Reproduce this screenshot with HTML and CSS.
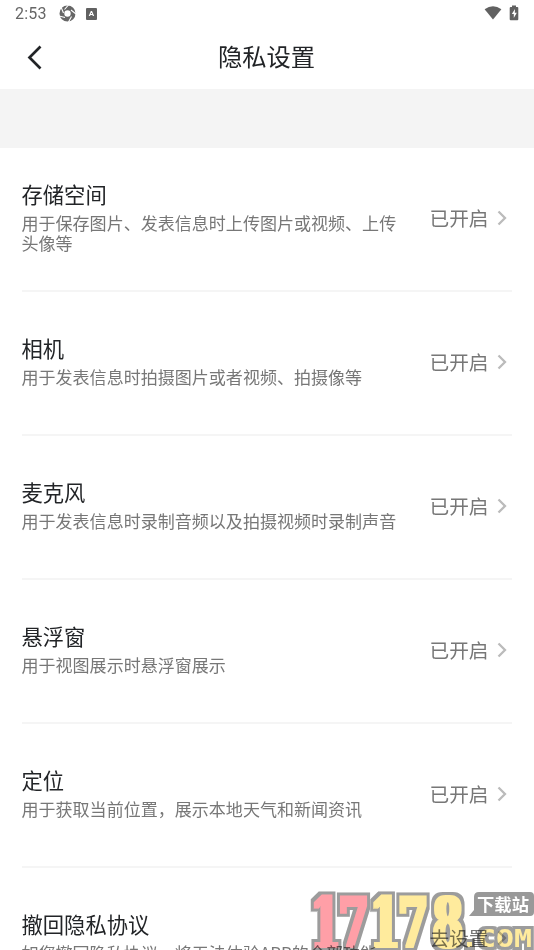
FILE: index.html
```html
<!DOCTYPE html>
<html lang="zh-CN">
<head>
<meta charset="utf-8">
<title>隐私设置</title>
<link rel="stylesheet" href="styles.css">
</head>
<body>
<div class="screen">
  <div class="status">
    <span class="time">2:53</span>
    <svg class="aperture" width="17" height="17" viewBox="0 0 17 17"><circle cx="8.500" cy="8.500" r="5.600" fill="none" stroke="#666" stroke-width="4.800"/><path d="M9.500 0L5.500 4.500M17 9L12 5M9.500 17l3-5.500M0 11l6 1.500M2 2l2.500 6" stroke="#fff" stroke-width="1.100"/></svg>
    <span class="abadge">A</span>
    <svg class="wifi" width="18" height="14" viewBox="0 0 18 14"><path d="M.6 3.200Q9-2.800 17.400 3.200L9 13.600z" fill="#616161"/></svg>
    <svg class="battery" width="10" height="16" viewBox="0 0 10 16"><path d="M3 .5h4V2h1.300q1 0 1 1v11.300q0 1-1 1H1.700q-1 0-1-1V3q0-1 1-1H3z" fill="#616161"/><path d="M6 4L2.800 9h2v4l3-5.300h-2z" fill="#fff"/></svg>
  </div>
  <header class="bar">
    <svg class="back" width="16" height="26" viewBox="0 0 16 26"><path d="M13.500 2.500L2.500 13.500l11 11" fill="none" stroke="#222427" stroke-width="2.700"/></svg>
    <h1>隐私设置</h1>
  </header>
  <div class="band"></div>
  <main class="list">
    <section class="row"><div class="info"><h2>存储空间</h2><p>用于保存图片、发表信息时上传图片或视频、上传<br>头像等</p></div><span class="state">已开启</span><svg class="chev" width="10" height="16" viewBox="0 0 10 16"><path d="M1.500 1.500L8 8l-6.500 6.500"/></svg></section>
    <section class="row"><div class="info"><h2>相机</h2><p>用于发表信息时拍摄图片或者视频、拍摄像等</p></div><span class="state">已开启</span><svg class="chev" width="10" height="16" viewBox="0 0 10 16"><path d="M1.500 1.500L8 8l-6.500 6.500"/></svg></section>
    <section class="row"><div class="info"><h2>麦克风</h2><p>用于发表信息时录制音频以及拍摄视频时录制声音</p></div><span class="state">已开启</span><svg class="chev" width="10" height="16" viewBox="0 0 10 16"><path d="M1.500 1.500L8 8l-6.500 6.500"/></svg></section>
    <section class="row"><div class="info"><h2>悬浮窗</h2><p>用于视图展示时悬浮窗展示</p></div><span class="state">已开启</span><svg class="chev" width="10" height="16" viewBox="0 0 10 16"><path d="M1.500 1.500L8 8l-6.500 6.500"/></svg></section>
    <section class="row"><div class="info"><h2>定位</h2><p>用于获取当前位置，展示本地天气和新闻资讯</p></div><span class="state">已开启</span><svg class="chev" width="10" height="16" viewBox="0 0 10 16"><path d="M1.500 1.500L8 8l-6.500 6.500"/></svg></section>
    <section class="row"><div class="info"><h2>撤回隐私协议</h2><p>如您撤回隐私协议，将无法体验APP的全部功能</p></div><span class="state">去设置</span><svg class="chev" width="10" height="16" viewBox="0 0 10 16"><path d="M1.500 1.500L8 8l-6.500 6.500"/></svg></section>
  </main>
  <svg class="mark" width="234" height="70" viewBox="0 0 234 70">
    <defs>
      <filter id="block" x="0" y="0" width="234" height="80" filterUnits="userSpaceOnUse" color-interpolation-filters="sRGB">
        <feMorphology in="SourceGraphic" operator="dilate" radius="2 1" result="face"/>
        <feMorphology in="face" operator="dilate" radius="3" result="edge"/>
        <feFlood flood-color="#9c9c9c"/>
        <feComposite in2="edge" operator="in" result="rim"/>
        <feMerge><feMergeNode in="rim"/><feMergeNode in="face"/></feMerge>
      </filter>
      <filter id="small" x="0" y="0" width="234" height="80" filterUnits="userSpaceOnUse" color-interpolation-filters="sRGB">
        <feMorphology in="SourceGraphic" operator="dilate" radius="3" result="edge"/>
        <feFlood flood-color="#9c9c9c"/>
        <feComposite in2="edge" operator="in" result="rim"/>
        <feMerge><feMergeNode in="rim"/><feMergeNode in="SourceGraphic"/></feMerge>
      </filter>
    </defs>
    <g filter="url(#block)">
      <g class="digits" transform="scale(.62 1)">
        <text x="17 62" y="67" class="pink">17</text>
        <text x="113 158 214" y="67" class="gold">178</text>
      </g>
    </g>
    <g filter="url(#small)">
      <text x="178" y="67" textLength="54" lengthAdjust="spacingAndGlyphs" class="com">COM</text>
      <rect x="167" y="62" width="5" height="5" class="gold"/>
    </g>
    <path d="M179 12h51q4 0 4 4v16q0 4-4 4H169l5-6V17q0-5 5-5z" fill="#999"/>
    <text x="177" y="31" textLength="52" class="tag">下载站</text>
  </svg>
</div>
</body>
</html>
```
FILE: styles.css
```css
* { box-sizing: border-box; }
body { margin: 0; background: #fff; font-family: "Noto Sans CJK SC", sans-serif; overflow: hidden; }
.screen { position: relative; width: 534px; height: 950px; overflow: hidden; background: #fff; }
.status { height: 28px; display: flex; align-items: center; padding: 0 15px 2px; }
.time { font: 16px/20px Roboto, sans-serif; color: #666; width: 44px; letter-spacing: .2px; padding-top: 2px; }
.abadge { width: 11px; height: 12px; margin-left: 10px; margin-top: 1px; border-radius: 1px; background: #616161; color: #fff; font: bold 8px/12px Roboto, sans-serif; text-align: center; }
.wifi { margin-left: auto; }
.battery { margin: 0 0 0 7px; }
.bar { height: 61px; display: grid; grid-template-columns: 54px 1fr 54px; align-items: center; padding-bottom: 3px; }
.back { margin-left: 27px; }
h1 { margin: 0 1px 3px 0; font-size: 24.300px; font-weight: 400; line-height: 32px; text-align: center; color: #222427; }
.band { height: 59px; background: #f4f4f4; }
.list { padding: 0 22px 0 21.500px; }
.row { height: 144px; display: flex; align-items: center; padding-bottom: 2px; border-bottom: 2px solid #f5f5f5; }
.info { width: 408px; flex: none; white-space: nowrap; }
h2 { margin: 0 0 8px; font-size: 21.300px; font-weight: 400; line-height: 22px; color: #222427; }
p { margin: 0; font-size: 17.050px; line-height: 20px; color: #777; }
.state { width: 67px; padding-bottom: 1px; font-size: 19.700px; line-height: 28px; color: #777; }
.chev { fill: none; stroke: #bbb; stroke-width: 2.300; }
.mark { position: absolute; left: 300px; top: 880px; mix-blend-mode: multiply; }
.digits text { font: bold 70px "DejaVu Serif", serif; }
.pink { fill: #ff9fa7; }
.gold { fill: #ffeb9d; }
.com { font: bold 25px "DejaVu Sans Mono", monospace; fill: #ffeb9d; }
.tag { font: bold 17.300px "Noto Sans CJK SC", sans-serif; fill: #fff; }
```
